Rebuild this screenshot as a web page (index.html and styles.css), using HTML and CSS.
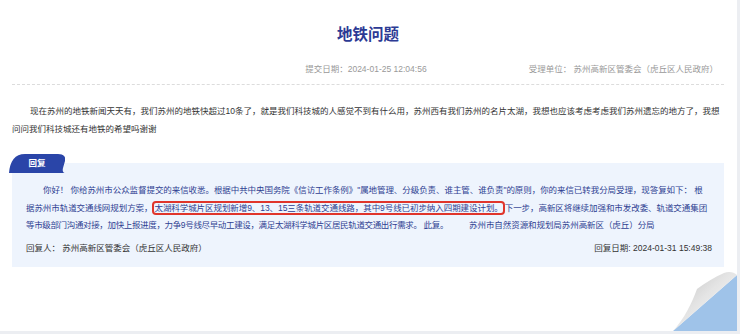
FILE: index.html
```html
<!DOCTYPE html>
<html lang="zh-CN">
<head>
<meta charset="utf-8">
<title>地铁问题</title>
<link rel="stylesheet" href="styles.css">
</head>
<body>
<div class="card">
  <h1 class="title">地铁问题</h1>
  <div class="meta">
    <span>提交日期：2024-01-25 12:04:56</span>
    <span>受理单位：&nbsp;苏州高新区管委会（虎丘区人民政府）</span>
  </div>
  <p class="question">现在苏州的地铁新闻天天有，我们苏州的地铁快超过10条了，就是我们科技城的人感觉不到有什么用，苏州西有我们苏州的名片太湖，我想也应该考虑考虑我们苏州遗忘的地方了，我想问问我们科技城还有地铁的希望吗谢谢</p>
  <div class="reply">
    <div class="tab">回复</div>
    <div class="reply-box">
      <p class="reply-text">你好！&nbsp;你给苏州市公众监督提交的来信收悉。根据中共中央国务院《信访工作条例》"属地管理、分级负责、谁主管、谁负责"的原则，你的来信已转我分局受理，现答复如下：&nbsp;根<br>据苏州市轨道交通线网规划方案，<span class="mark">太湖科学城片区规划新增9、13、15三条轨道交通线路，其中9号线已初步纳入四期建设计划。</span>下一步，高新区将继续加强和市发改委、轨道交通集团<br><span class="tight">等市级部门沟通对接，加快上报进度，力争9号线尽早动工建设，满足太湖科学城片区居民轨道交通出行需求。&nbsp;此复。</span><span class="gap"></span>苏州市自然资源和规划局苏州高新区（虎丘）分局</p>
      <div class="reply-foot">
        <span>回复人：&nbsp;苏州高新区管委会（虎丘区人民政府）</span>
        <span>回复日期: 2024-01-31 15:49:38</span>
      </div>
    </div>
  </div>
  <svg class="curl" width="70" height="64" viewBox="0 0 70 64" aria-hidden="true">
    <defs>
      <linearGradient id="flap" x1="0" y1="0" x2="1" y2="1">
        <stop offset="0" stop-color="#bdbdbd"/>
        <stop offset="0.45" stop-color="#e4e4e4"/>
        <stop offset="1" stop-color="#ffffff"/>
      </linearGradient>
    </defs>
    <path d="M70 8 L70 64 L6 64 Z" fill="#9fc3e9"/>
    <path d="M6 64 L70 8 C67 5 62 4 57 6 C48 10 38 16 30 22 C25 36 17 52 6 64 Z" fill="url(#flap)"/>
  </svg>
</div>
</body>
</html>
```
FILE: styles.css
```css
html, body {
  margin: 0;
  padding: 0;
}
body {
  background: #eceef2;
  font-family: "Liberation Sans", "Noto Sans CJK SC", sans-serif;
  font-size: 8.5px;
  color: #333;
}
.card {
  position: relative;
  width: 737px;
  height: 331px;
  background: #fff;
  box-sizing: border-box;
  padding: 23px 13px 0 12px;
  overflow: hidden;
}
.title {
  margin: 0;
  text-align: center;
  font-size: 15.5px;
  line-height: 20px;
  font-weight: bold;
  color: #2c3a94;
  font-family: "Noto Sans CJK SC", sans-serif;
}
.meta {
  margin-top: 19px;
  display: flex;
  justify-content: flex-end;
  gap: 102px;
  padding: 0 6px 8px 0;
  line-height: 14px;
  color: #999;
  border-bottom: 1px dashed #dcdcdc;
}
.question {
  margin: 17px 0 0;
  line-height: 18px;
  text-indent: 18px;
  color: #333;
}
.reply {
  margin-top: 16px;
}
.tab {
  position: relative;
  z-index: 1;
  width: 56px;
  height: 19px;
  margin-left: -3px;
  background: #2a45a8;
  color: #fff;
  font-weight: bold;
  text-align: center;
  line-height: 19px;
  clip-path: path("M0 19 C1 7 6 0 16 0 L49 0 C55 0 57 3 56 7 L54 14 C53 18 55 19 56 19 Z");
}
.reply-box {
  margin-top: -10px;
  background: #eef4fd;
  padding: 19px 12px 10px 14px;
}
.reply-text {
  margin: 0;
  line-height: 17.5px;
  letter-spacing: -0.07px;
  text-indent: 17px;
  color: #2f3f92;
}
.tight {
  letter-spacing: -0.35px;
}
.mark {
  border: 2px solid #e0352b;
  border-radius: 4px;
  padding: 0;
}
.gap {
  display: inline-block;
  width: 21px;
}
.reply-foot {
  margin-top: 5px;
  display: flex;
  justify-content: space-between;
  line-height: 17px;
  color: #333;
}
.curl {
  position: absolute;
  right: 0;
  bottom: 0;
  display: block;
}
```
